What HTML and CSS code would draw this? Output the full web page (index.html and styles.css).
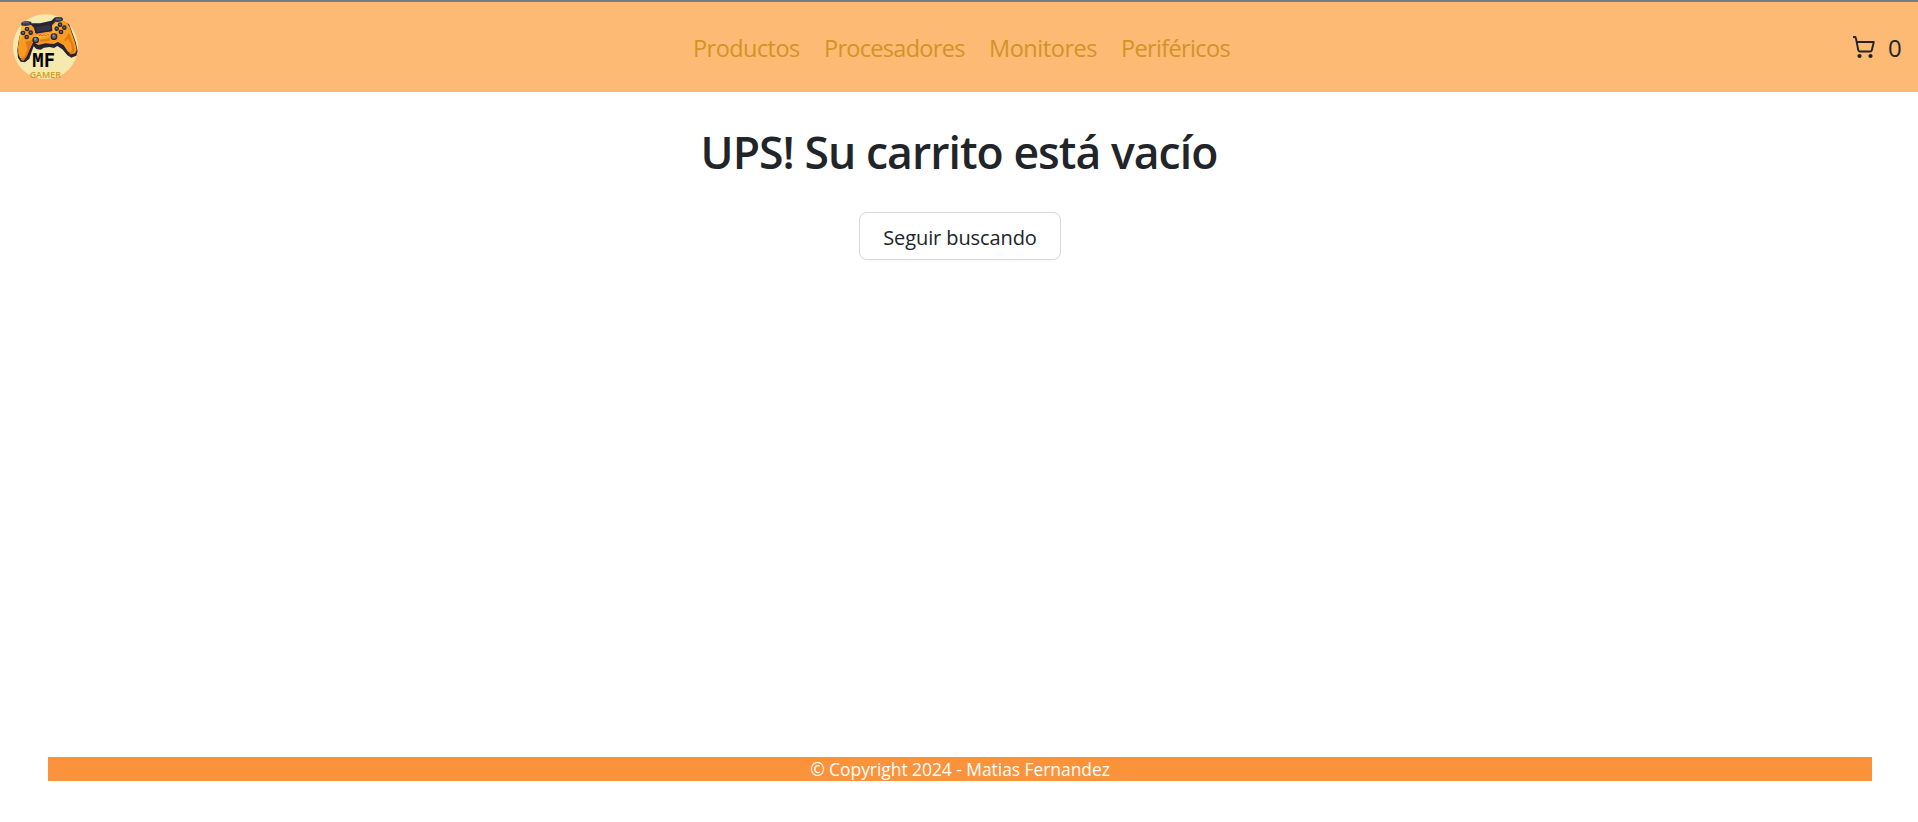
FILE: index.html
```html
<!DOCTYPE html>
<html lang="es">
<head>
<meta charset="utf-8">
<title>MF Gamer</title>
<link rel="stylesheet" href="styles.css">
</head>
<body>
<header class="header">
  <svg class="logo" viewBox="36 36 204 204" role="img" aria-label="MF Gamer">
    <circle cx="136.500" cy="140.500" r="97.500" fill="#f6e9ae"/>
    <path fill="#252437" d="M63 70h12v-5h19v5h26l34-8 11-10 20 2 5 9 17 10 6 15 6 16 8 22 6 28-4 13-15 6-12-7-15-18-15-10-10 6-13-3-17 2-10 6-13-2-8-8-6 16-7 21-13 11-13-2-8-12-2-22 4-29 5-22 6-18z"/>
    <path fill="#f99b20" d="M65 78l12-5 17 2 9 10 3 14 47-5 3-18 12-13 17-3 13 5 11 16 8 23 8 23 5 24-5 9-10 3-12-9-12-18-17-10-13 6-25-2-21 5-15-9-12 23-8 19-10 10-10-4-5-12-1-20 5-31 4-21z"/>
    <path fill="#ffbd3e" d="M65 79l15-4 10 5-19 9-4 20-9 15zM159 77l14-13 15-1-14 15-8 18-8 6zM102 108l50-9-4 9-43 9z"/>
    <path fill="#e47a13" d="M76 126l26-8-9 20-12 30-10 14-10-3 14-10 7-22zM193 119l14-21 12 31 5 22-6 11-10 1 8-14-3-18-9-15-9 10zM121 119l29-4-2 8-29 2z"/>
    <path fill="#252437" d="M100 76l54-9 3 26-49 8z"/>
    <path fill="#343347" d="M106 82l44-8 2 15-40 7z"/>
    <path fill="#34384d" d="M65 67l8-3h14l5 4-3 8-14 2-10-3zM163 58l8-7 14 1 5 5-5 7-14 3-8-3z"/>
    <path fill="#6f7384" d="M68 67h18v3H68zM168 56h14v3h-14z"/>
    <g fill="#252538">
      <circle cx="81" cy="87" r="7"/><circle cx="69" cy="99" r="7"/><circle cx="92" cy="98" r="7"/><circle cx="80" cy="111" r="7"/>
      <circle cx="180" cy="74" r="7"/><circle cx="170" cy="86" r="7"/><circle cx="193" cy="83" r="7"/><circle cx="183" cy="96" r="7"/>
      <circle cx="107" cy="120" r="10"/><circle cx="162" cy="110" r="10"/>
    </g>
    <g fill="#626679">
      <path d="M78 84h6v5h-6zM66 96h6v5h-6zM89 95h6v5h-6zM77 108h6v5h-6zM177 71h6v5h-6zM167 83h6v5h-6zM190 80h6v5h-6zM180 93h6v5h-6z"/>
      <path d="M101 115l5-3 6 3 2 6-5 5-7-2zM156 105l5-3 6 3 2 6-5 5-7-2z"/>
    </g>
    <path fill="#a2a5af" d="M103 115h5v4h-5zM158 105h5v4h-5z"/>
    <path d="M117 107l6-3 4 4 6-4 4 3 5-3 6 1" fill="none" stroke="#ef5122" stroke-width="3"/>
    <text class="logo-mf" x="97" y="201" textLength="68" lengthAdjust="spacingAndGlyphs">MF</text>
    <text class="logo-gamer" x="89" y="233" textLength="94" lengthAdjust="spacingAndGlyphs">GAMER</text>
  </svg>
  <nav class="nav">
    <a class="nav-link productos">Productos</a>
    <a class="nav-link procesadores">Procesadores</a>
    <a class="nav-link monitores">Monitores</a>
    <a class="nav-link perifericos">Periféricos</a>
  </nav>
  <div class="cart">
    <svg class="cart-icon" viewBox="0 0 24 24" aria-hidden="true">
      <path d="M1 2h2.400l.8 2.500L6.300 15.200q.2 1.300 1.500 1.300h10.400q1.300 0 1.600-1.300L21.800 7H5" fill="none" stroke="#212529" stroke-width="1.900" stroke-linejoin="round"/>
      <circle cx="7.500" cy="21" r="2.100" fill="#212529"/>
      <circle cx="18.500" cy="21" r="2.100" fill="#212529"/>
    </svg>
    <span class="cart-count">0</span>
  </div>
</header>
<main class="main">
  <h1 class="title">UPS! Su carrito está vacío</h1>
  <button class="button"><span class="button-label">Seguir buscando</span></button>
</main>
<footer class="footer"><span class="copyright">© Copyright 2024 - Matias Fernandez</span></footer>
</body>
</html>
```
FILE: styles.css
```css
* { box-sizing: border-box; }
body {
  margin: 0;
  min-height: 822px;
  display: flex;
  flex-direction: column;
  background: #fff;
  color: #212529;
  font-family: "Open Sans", "Noto Sans", sans-serif;
}
.header {
  height: 92px;
  display: grid;
  grid-template-columns: 692px 1fr 70px;
  align-items: center;
  border-top: 2px solid #6f7f85;
  background: #fdba74;
}
.logo { width: 68px; height: 68px; margin: 0 0 2px 12px; }
.logo-mf { font: bold 58px "DejaVu Sans Mono", monospace; fill: #050505; }
.logo-gamer { font: 600 25px "Noto Sans", sans-serif; fill: #d99b26; }
.nav { display: flex; gap: 24px; }
.nav-link {
  color: #cf9526;
  font-size: 23.500px;
  line-height: 36px;
  white-space: nowrap;
  padding-top: 2px;
}
.productos { width: 108px; padding-left: 1px; letter-spacing: -0.550px; }
.procesadores { width: 141px; letter-spacing: -0.700px; }
.monitores { width: 108px; letter-spacing: -0.450px; }
.perifericos { width: 110px; letter-spacing: -0.650px; }
.cart { display: flex; align-items: center; gap: 12px; padding-left: 4px; }
.cart-icon { width: 24px; height: 24px; }
.cart-count { font-size: 24px; line-height: 36px; padding-top: 2px; }
.main { flex: 1; display: flex; flex-direction: column; align-items: center; }
.title {
  margin: 33px 0 33px;
  font-size: 44.500px;
  line-height: 54px;
  font-weight: 600;
  letter-spacing: -0.950px;
  white-space: nowrap;
}
.button {
  width: 202px;
  height: 48px;
  margin-left: 2px;
  padding: 3px 0 0;
  border: 1px solid #d9d9d9;
  border-radius: 8px;
  background: #fff;
  box-shadow: 0 2px 0 rgba(0, 0, 0, 0.02);
  color: #212529;
  font-family: inherit;
  font-size: 20px;
  letter-spacing: -0.100px;
}
.footer {
  height: 24px;
  margin: 0 46px 41px 48px;
  background: #fb923c;
  color: #fff;
  font-size: 17.500px;
  letter-spacing: -0.070px;
  line-height: 25px;
  text-align: center;
}
```
